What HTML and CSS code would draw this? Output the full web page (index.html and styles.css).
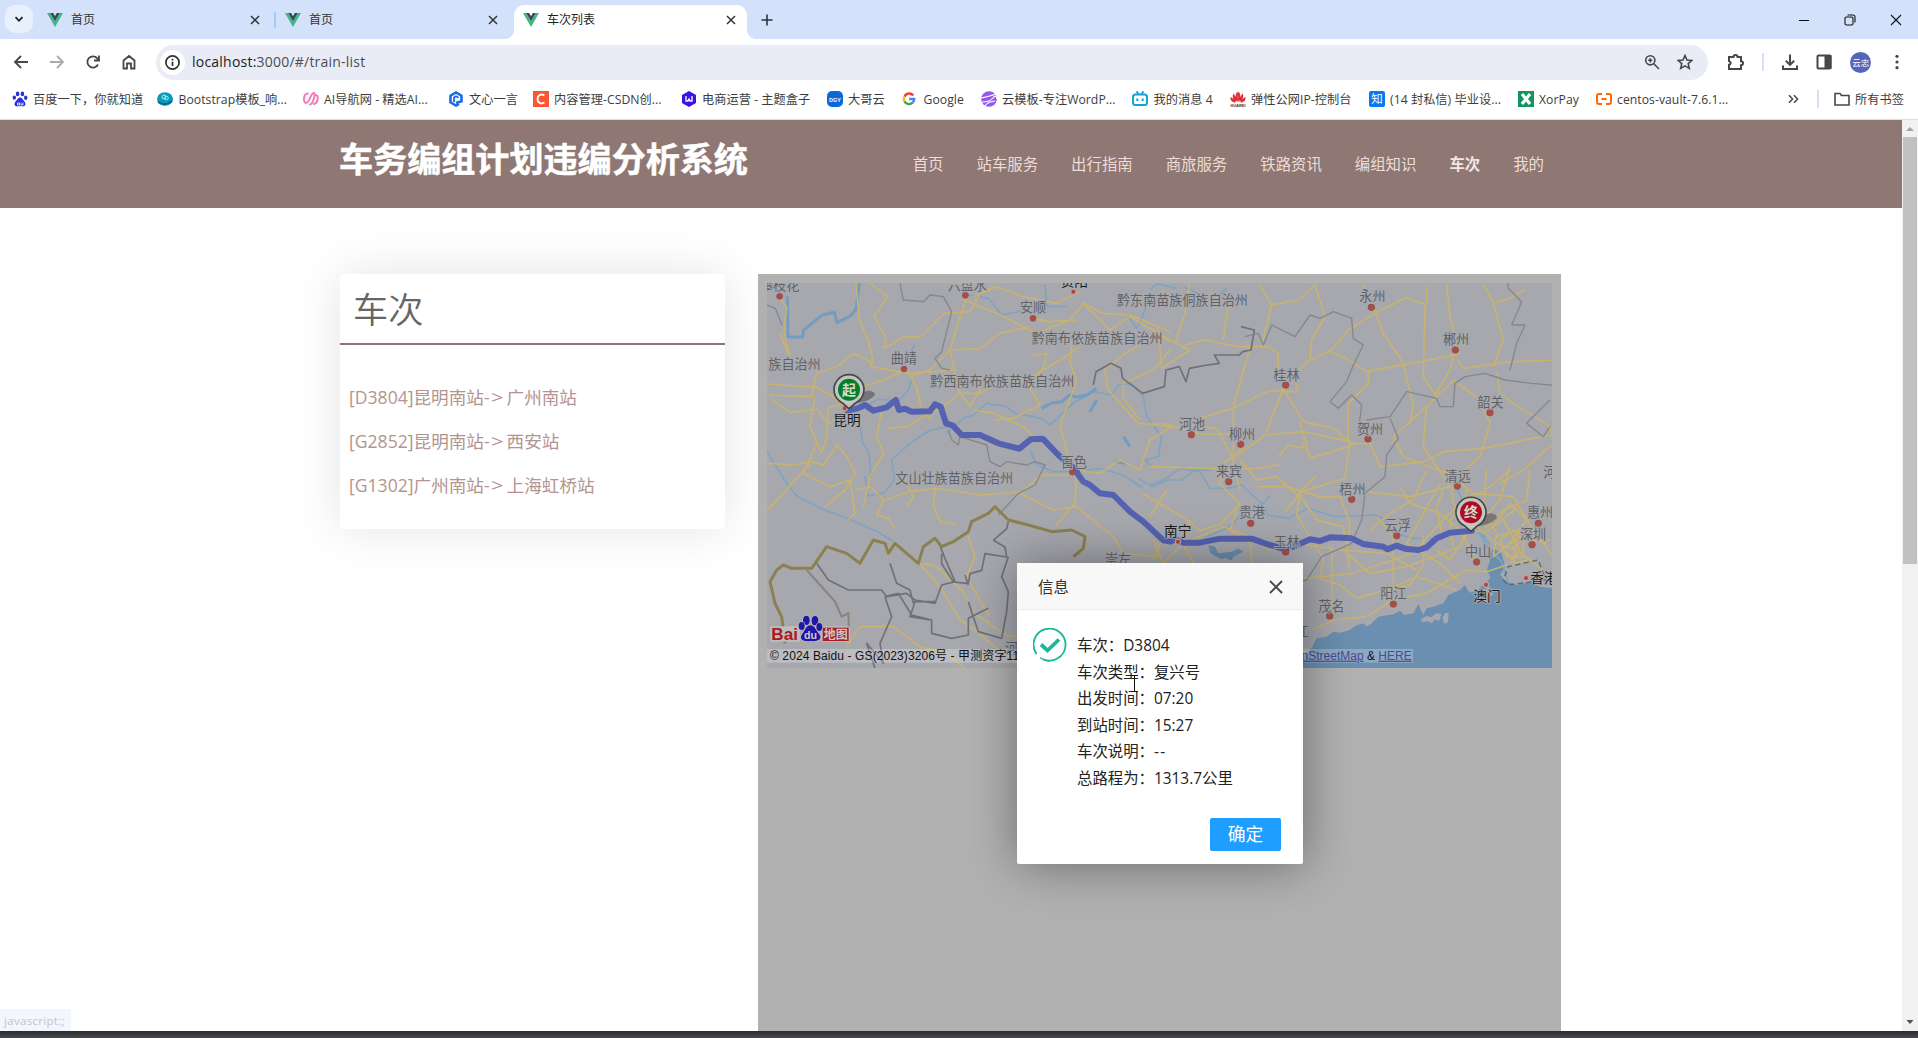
FILE: index.html
```html
<!DOCTYPE html>
<html lang="zh-CN">
<head>
<meta charset="utf-8">
<title>车次列表</title>
<link rel="stylesheet" href="styles.css">
</head>
<body>
<svg class="defs" aria-hidden="true">
  <symbol id="vue" viewBox="0 0 16 14"><path fill="#41b883" d="M0 0h3.2L8 8.3 12.8 0H16L8 14z"/><path fill="#35495e" d="M3.2 0h3L8 3.2 9.8 0h3L8 8.3z"/></symbol>
  <symbol id="close" viewBox="0 0 10 10"><path d="M1 1l8 8M9 1L1 9" fill="none" stroke="currentColor" stroke-width="1.5"/></symbol>
</svg>
<header class="tabstrip">
  <span class="tab-search"><svg width="10" height="7" viewBox="0 0 10 7"><path d="M1.5 1.2L5 4.8l3.500-3.600" fill="none" stroke="#1f1f1f" stroke-width="1.800"/></svg></span>
  <div class="tab tab-first"><svg class="fav"><use href="#vue"/></svg><span>首页</span><svg class="x"><use href="#close"/></svg></div>
  <div class="tab tab-second"><svg class="fav"><use href="#vue"/></svg><span>首页</span><svg class="x"><use href="#close"/></svg></div>
  <div class="tab active"><svg class="fav"><use href="#vue"/></svg><span>车次列表</span><svg class="x"><use href="#close"/></svg></div>
  <svg class="plus" width="12" height="12" viewBox="0 0 12 12"><path d="M6 .5v11M.5 6h11" stroke="#303238" stroke-width="1.600"/></svg>
  <div class="window-buttons">
    <svg width="12" height="12" viewBox="0 0 12 12"><path d="M1 6.500h10" stroke="#111"/></svg>
    <svg width="12" height="12" viewBox="0 0 12 12" fill="none" stroke="#111" stroke-width="1.100"><rect x="1" y="3" width="8" height="8" rx="1.500"/><path d="M3.500 1h5.500a2 2 0 0 1 2 2v5.500"/></svg>
    <svg width="12" height="12" viewBox="0 0 12 12"><path d="M1 1l10 10M11 1L1 11" stroke="#111" stroke-width="1.100"/></svg>
  </div>
</header>
<div class="toolbar">
  <div class="nav-icons">
    <svg viewBox="0 0 16 16"><path d="M15 8H2.500M8 2L2 8l6 6"/></svg>
    <svg class="dim" viewBox="0 0 16 16"><path d="M1 8h12.500M8 2l6 6-6 6"/></svg>
    <svg viewBox="0 0 16 16"><path d="M13 10.500A5.600 5.600 0 1 1 12.300 4.400L14 6.200M14 1.500v5H9"/></svg>
    <svg viewBox="0 0 16 16"><path d="M2.500 6.500L8 2l5.500 4.500V14.500H10V9.500H6v5H2.500z"/></svg>
  </div>
  <div class="omnibox">
    <span class="info"><svg viewBox="0 0 16 16"><circle cx="8" cy="8" r="6.200"/><path d="M8 7.300v4M8 4.500v1.600"/></svg></span>
    <span class="url"><b>localhost:</b>3000/#/train-list</span>
    <svg class="ic" viewBox="0 0 16 16"><circle cx="6.300" cy="6.300" r="4.600"/><path d="M9.800 9.800L15 15M4.200 6.300h4.200M6.300 4.200v4.200"/></svg>
    <svg class="ic" viewBox="0 0 16 16"><path d="M8 1.500l2 4.500 4.900.4-3.700 3.200 1.100 4.800L8 11.900l-4.300 2.500 1.100-4.800L1.100 6.400 6 6z"/></svg>
  </div>
  <div class="actions">
    <svg viewBox="0 0 18 18"><path d="M2 4h4.500a2 2 0 0 1 4 0H14v4.200a2 2 0 0 1 0 4V16H2v-4.300c2.300-.8 2.300-2.800 0-3.600z"/></svg>
    <i class="rule"></i>
    <svg viewBox="0 0 18 18"><path d="M9 1.500v10M4.800 7.700L9 11.900l4.200-4.200M2 12.500V16h14v-3.500"/></svg>
    <svg viewBox="0 0 18 18"><rect x="2.500" y="2.500" width="13" height="13" rx="1"/><path fill="#45474a" d="M10.500 3h5v12h-5z"/></svg>
    <span class="avatar">云忠</span>
    <svg viewBox="0 0 18 18"><g fill="#45474a" stroke="none"><circle cx="9" cy="3.300" r="1.600"/><circle cx="9" cy="9" r="1.600"/><circle cx="9" cy="14.700" r="1.600"/></g></svg>
  </div>
</div>
<nav class="bookmarks">
  <a><svg viewBox="0 0 16 16" fill="#2932d8"><ellipse cx="5.600" cy="2.900" rx="1.800" ry="2.400"/><ellipse cx="10.400" cy="2.900" rx="1.800" ry="2.400"/><ellipse cx="2.300" cy="6.600" rx="1.700" ry="2.200"/><ellipse cx="13.700" cy="6.800" rx="1.700" ry="2.200"/><path d="M8 6.500c2 0 2.500 2 4 3.500 3 3 1 6-2 5.300q-2-.4-4 0C3 16 1 13 4 10c1.500-1.500 2-3.500 4-3.500z"/><path d="M5.500 12h2v2h-2zM9 11.500v2.500h2v-2.500" stroke="#fff" stroke-width=".8" fill="none"/></svg>百度一下，你就知道</a>
  <a><svg viewBox="0 0 16 16"><ellipse cx="8" cy="8" rx="8" ry="6.800" fill="#0b98ba"/><path d="M1 11q7 5 14-1" stroke="#076b8b" stroke-width="2" fill="none"/><circle cx="7" cy="6" r="2" fill="none" stroke="#9ff"/><circle cx="9.500" cy="7" r="1.800" fill="none" stroke="#9ff" stroke-width=".8"/></svg>Bootstrap模板_响...</a>
  <a><svg viewBox="0 0 16 16" fill="none" stroke="#f27cb9" stroke-width="2" stroke-linecap="round"><path d="M5 2.500C0 3 0 11 3 12c4 0 4-10 8-10 1.500 2-1 11-4 11.500M13 4c3 1 2 8-2 9"/></svg>AI导航网 - 精选AI...</a>
  <a><svg viewBox="0 0 16 16" fill="none" stroke="#176de8" stroke-width="2.600"><path d="M11 13L8 14.500 2.500 11.300V4.700L8 1.500l5.500 3.200v5.500L8 12"/><path d="M6 11V6.500L8 5.300l2.500 1.500" stroke-width="1.800"/></svg>文心一言</a>
  <a><svg viewBox="0 0 16 16"><path fill="#fc5531" d="M0 0h16v16H0z"/><path d="M11.500 4.500C7 2 4.500 5 4.500 8s2.500 6 7 3.500" fill="none" stroke="#fff" stroke-width="1.900"/></svg>内容管理-CSDN创...</a>
  <a><svg viewBox="0 0 16 16"><path fill="#3c12e8" d="M8 0l7 4v8l-7 4-7-4V4z"/><path d="M5 5v5h2l1-2 1 2h2V5" fill="none" stroke="#fff" stroke-width="1.300"/></svg>电商运营 - 主题盒子</a>
  <a><svg viewBox="0 0 16 16"><rect width="16" height="16" rx="5" fill="#0869d8"/><text x="8" y="10.500" text-anchor="middle" class="tiny">DGY</text></svg>大哥云</a>
  <a><svg viewBox="0 0 16 16" fill="none" stroke-width="2.400"><path stroke="#ea4335" d="M11.200 4.500A5 5 0 0 0 2.600 5.600"/><path stroke="#fbbc05" d="M2.500 5.600a5.200 5.200 0 0 0 0 4.800"/><path stroke="#34a853" d="M2.500 10.400a5.200 5.200 0 0 0 8.200 1.300"/><path stroke="#4285f4" d="M10.700 11.700A5 5 0 0 0 12.200 8H7.200"/></svg>Google</a>
  <a><svg viewBox="0 0 16 16"><circle cx="8" cy="8" r="7.800" fill="#9358ef"/><path d="M0 7q6-1 15-4M1 11q8 0 11-4t4 1M4 15q2-4 10-5" fill="none" stroke="#fff" stroke-width="1.200"/></svg>云模板-专注WordP...</a>
  <a><svg viewBox="0 0 16 16" fill="none" stroke="#15a2d7" stroke-width="2"><rect x="1" y="3.500" width="14" height="10.500" rx="2.500"/><path d="M4.500 .5l2 2.500M11.500.5l-2 2.500M5.300 7.500v2.500M10.700 7.500v2.500"/></svg>我的消息 4</a>
  <a><svg viewBox="0 0 16 16" fill="#e12b36"><path d="M7.600 11C5 8 5 3 7.500.5 8.500 4 8.300 8 7.600 11zM8.400 11C11 8 11 3 8.500.5 7.500 4 7.700 8 8.400 11zM6.500 11C3 9 2 5 3.500 2.500 5.500 5 6.500 8 6.500 11zM9.500 11c3.500-2 4.500-6 3-8.500-2 2.500-3 5.500-3 8.500zM5.500 11.500C2 11.500 0 9 .5 6 3 7 5 9 5.500 11.500zM10.500 11.500c3.500 0 5.500-2.500 5-5.500-2.500 1-4.500 3-5 5.500z"/><text x="8" y="16" class="tiny dark" text-anchor="middle">HUAWEI</text></svg>弹性公网IP-控制台</a>
  <a><svg viewBox="0 0 16 16"><rect width="16" height="16" rx="2" fill="#0b78f2"/><text x="8" y="12" text-anchor="middle" class="zh">知</text></svg>(14 封私信) 毕业设...</a>
  <a><svg viewBox="0 0 16 16"><path fill="#12965d" d="M0 0h16v16H0z"/><path d="M4 3l8 10M12 3L4 13" stroke="#fff" stroke-width="3.200"/></svg>XorPay</a>
  <a><svg viewBox="0 0 16 16" fill="none" stroke="#ff6a00" stroke-width="2"><path d="M6 3H3Q1 3 1 5v6q0 2 2 2h3M10 3h3q2 0 2 2v6q0 2-2 2h-3M5.500 8h5"/></svg>centos-vault-7.6.1...</a>
  <svg class="more" viewBox="0 0 12 10"><path d="M1 1l4 4-4 4M6.500 1l4 4-4 4"/></svg>
  <i class="rule"></i>
  <a><svg viewBox="0 0 16 16" fill="none" stroke="#45474a" stroke-width="1.600"><path d="M1 2.500h5l1.500 2H15v9.500H1z"/></svg>所有书签</a>
</nav>
<div class="viewport">
  <div class="page">
    <header class="site-header">
      <h1>车务编组计划违编分析系统</h1>
      <nav class="menu"><a>首页</a><a>站车服务</a><a>出行指南</a><a>商旅服务</a><a>铁路资讯</a><a>编组知识</a><a class="current">车次</a><a>我的</a></nav>
    </header>
    <main class="content">
      <aside class="card">
        <h2>车次</h2>
        <ul><li>[D3804]昆明南站<span class="arrow">-<b>&gt;</b></span>广州南站</li><li>[G2852]昆明南站<span class="arrow">-<b>&gt;</b></span>西安站</li><li>[G1302]广州南站<span class="arrow">-<b>&gt;</b></span>上海虹桥站</li></ul>
      </aside>
      <section class="panel">
        <svg class="map" viewBox="51 39 2355 1155">
          <path fill="#a7a8ae" d="M0 0h2500v1300H0z"/>
          <!-- sea and estuary -->
          <path class="sea" d="M1640 1194L1660 1160 1685 1133 1700 1105 1730 1100 1750 1085 1770 1088 1800 1080 1815 1068 1840 1060 1850 1070 1865 1060 1885 1040 1930 1033 1950 1022 1962 1035 1990 1030 2005 1003 2020 1035 2030 1015 2050 1010 2080 1000 2095 975 2130 960 2145 945 2158 968 2185 960 2200 942 2222 925 2211 900 2220 872 2212 845 2235 838 2255 850 2265 890 2250 915 2270 935 2300 945 2340 935 2370 950 2406 955V1194z"/>
          <g fill="#a7a8ae"><path d="M2012 1048l18-10 14 4 14-12 16 2-6 20-14-4-8 12-14-6-16 2zM2078 1042l8-14 10 2-2 26-12 6zM2200 960l20-10 10 25-20 4zM2290 905l30-15 25 20 40 5-35 15-45-7z"/></g>
          <g class="river">
            <path class="wide" d="M112 79l2 122h44l2-20 55-45 38-10 8 32 40-20 17-20 10-80"/>
            <path d="M51 545l62 100 30 35 80 40 75 28 80 35 50 30M485 330l-10 30-30 35-60-8-30 18M495 225l-15 22M330 470l8 50 18 25 8 77M600 470l-60 10-60 40-55 50 8 60-30 38-50 10-8-60M655 75l60 10 40 50 60-12M885 45l5 65 60 0M1130 130l30 45 15-30 15-40M1200 60l20-20 60 15M1300 50l40 18-35 35M1400 80l30-25"/>
            <path d="M590 490l50-45 30-10 40-35 60 10 25 20 80 15 25 20 75-70 60-30 50 10 20-30 40-5 35 40 10 60 45 60-10 60-40 10 20 20M840 540l20 45 50 20 80 0 60-10 70 20 60 40M1165 625l40 25 50-20 40 0 40-30 50 0"/>
            <path class="wide" d="M875 415l30-16 30-4 25-20 20 6 30-6 30-20M1020 425l20-35M1120 500l20 30M1095 575l35 5"/>
            <path d="M1200 645l40-15 50-35 60 10 30 50 50 0 45-10 60 55 20 35 60 10 60-30 30 10 50 15 120-5 30 15 20 35 60 20 80 0 60-20 60 0 30 50 40 40 20 60M1370 800l60-25 50-45 60-30 20-25M2120 655l60 120 40 50M2200 775l10 50"/>
          </g>
          <path class="sea" d="M1375 825l20 5 10 20 40-5 20-10 15 10-30 15-5 12-18-8-12 4-20-10-15-10z"/>
          <g class="road">
            <path d="M318 40l10 110 25 55 15 60-5 25 115 20 140-10M362 40l50 40-40 60 35 60-5 35 60-35h50l70-70 80-5 30-60 45-15M370 280l-60-30-50 40-60 20-15 70-130-5M51 342l150 10 50 30 45 40-60 40-35-45-80 10-60-40M90 190l30 75-18-75 8-80-25-30M195 380l-15 90 35 80 15-50 5-85 60-20M51 580l80 5 50-10 40 10 40-60 30 35 25 50-30 50-60 50M180 580l-80 90-50 50M300 410l40-60 60-20 70-30 30 50 15 70 30 30M395 420l-15 80 20 50-40 70-20 90M410 475l60-5 50-30 60-30 50-40 60 0 60-30 80-10 100-60 60-40M480 320l60-20 60-60 30-100 20-55M600 240l90-5 60-45 90-20M600 240l25 120 35 50 30-50-10-30"/>
            <path d="M640 90l100 40 120 60 100-40 40-50 60 30 80 5 120 50M670 80l70-30 80 30 100 20 70-35M850 145l50 10 80-5M970 190l-10 85 20 60-50 130 20 80 20 50M850 255l40-5-10 45-45 50 35 60-80 40-60 5M1000 100l80 80 60-40 120 70 60 30-85 55-10-120M860 510l-40-40-90-40-60-10M980 600l70 10 60-40 60 30 30-90 65-40-100-10-90-100-10-60 60-50 55-30M1170 450l-50-65 0-45 90-40 50-60M1275 220l30-90 15-90M1420 210l15-110M1260 215l-50-35M1305 225l60-15 100 20 90 0 30 20 0 65M1500 230l-50 180 0 170 20 80"/>
            <path d="M1535 225l30-120-40-70M1565 105l80-15 50-45 30 95-40 70-5 60-70 60M1685 270l60-30 50-60 80-50 100-50M1740 245l50 20 60 40 240-45 40-10M1840 40l60 150 60 90 30 130-10 50M1970 85l60 20 0-60M2025 100l-5 220 40 60M2090 40l10 100 20 80-20 80-45 75M2120 265l20 30 140-20 150-5M2230 290l30-80-30-110-30-60M2235 98l40-10 50-30M2240 310l10 60 40 30 110 70 10 50-90 80-70 40M2110 330l80 60 30 70-30 100-70 60-160-60-30-60 100-90M2110 330l-80 80-10 120 80 120-120 30-180-20"/>
            <path d="M1350 445l100-30 100-50 50-5M1600 355l-55 140-95 70-50-90-110-15M1600 355l60 100 90 20 60 50-130 40-30-110M1600 365l45 0-10-35M1795 520l0-120 60-60 0-35M1800 520l60 0 30 70 130-15 60-30 120-10 200-40M1550 495l110-10 140 30-15 110-130 40-50 60M1585 560l30-35 50 10-10-20M1200 462l50 0 100 30 90 0 40 40-60 50-10 60 60 60-60 60-60 20-50-40-120-70M1200 590l160 5 160 0 70-10M1470 570l50 60 60-10 80 70 40 60 80 20 20 130"/>
            <path d="M100 670l-45 50M200 520l-40 90 80 40 60-20 15 100-20 20M315 660l45-10 40 40-20 45 35 10 20 30M395 695l80-30 80-10 140 20 120-10 60-50 80 0M460 620l30 60-20 30M555 655l-5 50 20 50 50 10M500 870l70 80 60 100 60 40 30 30 85 60M520 880l40 10 80 75 30 65 50 30M655 800l20 60-25 60 45 80 25 40M715 1060l60 40 60-10M810 670l100 50 70-10 60 50 50 40 30 50 110 10M980 600l-5 100-60 70M1200 740l50-80M1210 810l30 70 60-60 20-70"/>
            <path d="M430 1070l-100 0-40 60M430 1070l80 60 80 20 60 50M1240 800l-30 70M1290 810l40 65-20 50M1300 820l120-50 80 30 60 40 80-20 130 20 140 10 90 50M1460 720l-20 60 60 40 10 80M1520 650l90 0 100 30 60 0 30 80-10 90 70 60 110-20 160-60 30-80M1700 615l-50 50-10 70 80 130-10 60 60 20 50 40 70-20 90-20 40-60 0-90M1745 830l0 200M1690 1080l60-30 100-10 80-50 100-20 120-70 60 5 60-20M1610 930l200-20 180-60 70-80 60-60M1880 740l50 60 0 150 70-30 60 20 60 20M1950 650l30 50 90 30 60 50 80 5 90-70M2030 600l-40 90-70 40-60 50M2070 640l-60 110-40 70 100 60 60 60M2100 600l10 100 50 80-60 90-40-30"/>
            <path d="M2080 600l90 70 120 10 60 100 60 80M2170 670l-70 80 10 80M2210 600l-10 120 40 70-10 70 80-60 80 20M2280 590l-30 100-70 80 60 50 60 20 80 60M2140 700l80-50 60-50M2340 600l-10 90-70 30-60 60M2230 770l50-70 50 50-60 80M2250 810l40-30 30 30 0 50-50 0zM2280 840l50-40 70 10M2260 750l50 90-30 40M2080 660l-20 50 15 80M2150 650l-10 150 50 90M2255 830l40 50 40-10M2240 800l60-20 40 30M2300 800l-10 80"/>
          </g>
          <g class="border">
            <path d="M450 40l10 50 60 5 20-20 40 5 25 45-30 120-20 20 20 30 25 5M51 105l25 10 20 50M595 480l10 30 20 15 5-25 80 25 10 50 30 15 20-15 60 10 25-10 30 10-30 60-50 25-60 65"/>
            <path class="strong" d="M1030 345l8-40 45-25 30 15 5 30 60 45 65-20 5-50 40-10 20 45 10-40 55-10 35-5-15-25 75 0 10-10 25-5 10-60-40-10"/>
            <path d="M1485 200l40-10 15 35 25-60 70 35 45-65 30 10 40-20 55 20 5 60 30 20-30 60-20 50-50 60 25 20 40-40 30 30-10 80M1850 450l70-10 50-75 90 20 10 25 40 0 5-70 30-20 60-10 60 20 80 10 110 10M2280 300l20-80 25-55-40 0 30-70-40-40-5-30M1920 445l25 60-35 50-5 65-60 50-10 80-30 70-90 40-45 70-60 10M2400 390l-70 70 50 40 20-30"/>
            <path class="strong" d="M200 880l35 50 60 30 100 0 15 20 60-10 25 20 60 10 20-55 40-10-30-70-20-50M555 995l-60 0-15 45 60 10M420 880l20 60 40 20 10 40M405 980l20 60-35 80 10 60-50-60 40 120M405 980l40-10 40 65 60 15 0 40 60 15 50-10 0-50 60-30M730 811l40-35 5-20M730 811l35 20 5 30-65-10-10 50-35 10-5 30-45-5-35-55 0-30M655 945l-10-30M775 860l-20 60 20 45-5 60-15 80-70-20-30-90"/>
          </g>
          <path class="nation" d="M105 1120l-10-80-20-40-15-65 20-35 20-15 25 10 60 0 45-65 60 20 40 30 40-70 35 10 10 30 20-30 70 60 15-50 35-25 20 25 35-15 45-30 10-30 50-25 20-20 40 40 60 15 70 20 60-5 40 20-5 35-30 25"/>
          <path d="M170 900l85 95 20 45 20-10 2 60" fill="none" stroke="#85857e" stroke-width="6"/>
          <path class="dash" d="M2270 940l-10-10 15-40 90-20 15 40 10 20-120 15z"/>
          <path class="route" d="M292 422L320 416 345 405 370 422 410 412 437 390 447 420 465 416 485 425 540 424 555 403 572 410 588 460 608 466 635 495 690 495 745 520 808 536 842 508 878 506 925 555 978 600 985 615 1000 635 1020 645 1050 670 1090 675 1140 725 1180 755 1240 811 1262 815 1275 808 1300 818 1350 818 1410 806 1505 806 1550 822 1595 835 1630 830 1680 808 1710 813 1740 802 1805 805 1840 822 1900 830 1912 838 1940 827 1965 836 2005 840 2030 832 2060 805 2100 788 2165 782"/>
          <g class="dot"><circle cx="89" cy="79" r="9"/><circle cx="646" cy="76" r="9"/><circle cx="849" cy="145" r="9"/><circle cx="462" cy="297" r="9"/><circle cx="967" cy="606" r="9"/><circle cx="1864" cy="112" r="10"/><circle cx="2116" cy="240" r="10"/><circle cx="1607" cy="345" r="10"/><circle cx="2220" cy="428" r="10"/><circle cx="1854" cy="507" r="10"/><circle cx="1324" cy="494" r="10"/><circle cx="1472" cy="523" r="10"/><circle cx="1436" cy="635" r="10"/><circle cx="1805" cy="688" r="10"/><circle cx="1502" cy="760" r="10"/><circle cx="1607" cy="846" r="10"/><circle cx="1940" cy="797" r="10"/><circle cx="2122" cy="648" r="10"/><circle cx="2365" cy="760" r="10"/><circle cx="2346" cy="824" r="10"/><circle cx="2180" cy="876" r="10"/><circle cx="1739" cy="1038" r="10"/><circle cx="1930" cy="1002" r="10"/></g>
          <g class="capital"><circle cx="970" cy="65" r="8"/><circle cx="284" cy="415" r="8"/><circle cx="1284" cy="815" r="8"/><circle cx="2208" cy="944" r="8"/><circle cx="2328" cy="924" r="8"/></g>
          <g class="label">
            <text x="30" y="60">攀枝花</text><text x="593" y="60">六盘水</text><text x="810" y="126">安顺</text><text x="1101" y="104">黔东南苗族侗族自治州</text><text x="845" y="219">黔南布依族苗族自治州</text><text x="422" y="278">曲靖</text><text x="55" y="298">族自治州</text><text x="541" y="347">黔西南布依族苗族自治州</text><text x="932" y="590">百色</text><text x="436" y="639">文山壮族苗族自治州</text><text x="1065" y="882">崇左</text><text x="765" y="1150">河内</text>
            <text x="1828" y="93">永州</text><text x="2079" y="223">郴州</text><text x="1570" y="329">桂林</text><text x="2182" y="412">韶关</text><text x="1821" y="492">贺州</text><text x="1287" y="476">河池</text><text x="1437" y="506">柳州</text><text x="1398" y="617">来宾</text><text x="1768" y="672">梧州</text><text x="1467" y="742">贵港</text><text x="1571" y="831">玉林</text><text x="1904" y="779">云浮</text><text x="2084" y="632">清远</text><text x="2331" y="742">惠州</text><text x="2310" y="806">深圳</text><text x="2145" y="858">中山</text><text x="1705" y="1022">茂名</text><text x="1891" y="984">阳江</text><text x="1597" y="1098">湛江</text><text x="2380" y="622">河源</text>
          </g>
          <g class="label main"><text x="932" y="47">贵阳</text><text x="250" y="465">昆明</text><text x="1242" y="797">南宁</text><text x="2170" y="994">澳门</text><text x="2341" y="938">香港</text></g>
          <g class="shadow"><path d="M310 400q10-35 45-38 25 2 18 16-20 20-63 22zM2176 768q10-35 45-38 25 2 18 16-20 20-63 22z"/></g>
          <g class="pin"><path d="M297 416L277 399A45 45 0 1 1 317 399Z"/><circle cx="297" cy="359" r="33" fill="#087d27"/><text x="297" y="374">起</text></g>
          <g class="pin"><path d="M2163 784L2143 767A45 45 0 1 1 2183 767Z"/><circle cx="2163" cy="727" r="33" fill="#ae0d21"/><text x="2163" y="742">终</text></g>
          <g class="brand"><rect x="60" y="1069" width="90" height="46" rx="5"/><rect x="212" y="1069" width="88" height="46" rx="5"/><text x="64" y="1111" textLength="80" lengthAdjust="spacingAndGlyphs">Bai</text><path fill="#a81a25" d="M218 1073h78v40h-78z"/><text x="221" y="1107" class="white">地图</text><g fill="#2017a6" stroke="#bbb" stroke-width="5" paint-order="stroke"><ellipse cx="169" cy="1051" rx="10" ry="14"/><ellipse cx="195" cy="1052" rx="10" ry="14"/><ellipse cx="155" cy="1068" rx="9" ry="12"/><ellipse cx="208" cy="1071" rx="9" ry="12"/><path d="M181 1066c15 0 17 18 27 27 10 14-3 23-26 20-24 3-35-5-26-20 9-9 11-27 25-27z"/></g><text x="162" y="1108" class="du">du</text></g>
          <path fill="#fff" opacity=".24" d="M51 1137h800v41H51zM1300 1137h689v41H1300z"/>
          <g class="copyright"><text x="60" y="1169" textLength="765">© 2024 Baidu - GS(2023)3206号 - 甲测资字111</text><text x="1985" y="1169" text-anchor="end">© <tspan class="link">OpenStreetMap</tspan> &amp; <tspan class="link">HERE</tspan></text></g>
        </svg>
      </section>
    </main>
    <div class="dialog">
      <div class="dialog-title"><span>信息</span><svg viewBox="0 0 14 14"><path d="M1 1l12 12M13 1L1 13"/></svg></div>
      <div class="dialog-body">
        <svg class="success" viewBox="0 0 34 34"><path d="M3.600 26A16 16 0 1 1 10 31.200" stroke-width="1.800"/><path d="M7 29.500a16 16 0 0 0 10 3.500" stroke-width="1.300"/><path d="M8 16.500l6.500 6L26 11.500" stroke-width="3.800"/></svg>
        <p>车次：D3804<br>车次类型：复兴号<br>出发时间：07:20<br>到站时间：15:27<br>车次说明：<span class="dashes">--</span><br>总路程为：1313.7公里</p>
      </div>
      <button>确定</button>
    </div>
    <svg class="cursor" width="7" height="17" viewBox="0 0 7 17"><path d="M0 .5h2.500L3.500 1.500 4.500.5H7M3.500 1v15M0 16.500h2.500l1-1 1 1H7" fill="none" stroke="#111"/></svg>
    <span class="status">javascript:;</span>
  </div>
  <div class="scrollbar"><svg viewBox="0 0 16 17"><path fill="#a3a3a3" d="M4 11l4-4 4 4z"/></svg><i></i><svg class="down" viewBox="0 0 16 17"><path fill="#505050" d="M4.500 6h7L8 10z"/></svg></div>
</div>
<div class="desktop"></div>
</body>
</html>
```
FILE: styles.css
```css
* { box-sizing: border-box; }
body { margin: 0; width: 1918px; height: 1038px; overflow: hidden; display: flex; flex-direction: column; background: #fff; color: #333; font: 12px "Open Sans", "Noto Sans CJK SC", sans-serif; }
.defs { position: absolute; width: 0; height: 0; }
svg { flex: none; }

.tabstrip { height: 39px; background: #d3e1fb; display: flex; align-items: center; padding-left: 5px; }
.tab-search { width: 28px; height: 28px; margin-top: -1px; border-radius: 10px; background: #e9f0fd; display: grid; place-items: center; }
.tab { display: flex; align-items: center; width: 238px; height: 34px; padding: 0 10px 0 14px; position: relative; }
.tab span { flex: 1; margin-left: 8px; line-height: 18px; }
.tab .fav { width: 16px; height: 14px; }
.tab .x { width: 10px; height: 10px; margin-right: 5px; color: #333; }
.tab-first { padding-right: 6px; }
.tab-second { width: 243px; padding-right: 11px; }
.tab-second::before { content: ""; position: absolute; left: 3px; top: 9px; width: 2px; height: 16px; background: #a9c7f2; }
.tab.active { width: 233px; height: 34px; margin-top: 5px; padding: 0 6px 5px 9px; background: #fff; border-radius: 10px 10px 0 0; color: #1f1f1f; }
.tab.active::before, .tab.active::after { content: ""; position: absolute; bottom: 0; width: 10px; height: 10px; }
.tab.active::before { left: -10px; background: radial-gradient(circle at 0 0, transparent 10px, #fff 10.5px); }
.tab.active::after { right: -10px; background: radial-gradient(circle at 100% 0, transparent 10px, #fff 10.5px); }
.plus { margin-left: 14px; }
.window-buttons { margin-left: auto; margin-right: 16px; display: flex; gap: 34px; }

.toolbar { height: 46px; display: flex; align-items: center; padding-left: 13px; }
.nav-icons { display: flex; gap: 20px; width: 143px; }
.nav-icons svg { width: 16px; height: 16px; fill: none; stroke: #45474a; stroke-width: 1.8; }
.nav-icons .dim { stroke: #aaa; }
.omnibox { width: 1552px; height: 35px; border-radius: 18px; background: #e9ecf6; display: flex; align-items: center; gap: 17px; padding: 0 15px 0 4px; }
.info { width: 25px; height: 25px; border-radius: 50%; background: #fff; display: grid; place-items: center; margin-right: -10px; }
.info svg { width: 17px; height: 17px; fill: none; stroke: #303030; stroke-width: 1.6; }
.url { flex: 1; font-size: 14px; letter-spacing: .22px; padding-bottom: 2px; color: #4b4d52; }
.url b { font-weight: 400; color: #202124; }
.ic { width: 16px; height: 16px; fill: none; stroke: #45474a; stroke-width: 1.6; }
.actions { display: flex; align-items: center; justify-content: space-between; width: 179px; margin-left: 19px; }
.actions svg { width: 18px; height: 18px; fill: none; stroke: #45474a; stroke-width: 2; }
.rule { width: 2px; height: 18px; background: #d3e0f7; }
.avatar { width: 21px; height: 21px; border-radius: 50%; background: #5565b8; color: #fff; font-size: 8.5px; line-height: 21px; text-align: center; }

.bookmarks { height: 35px; padding: 0 0 6px 11.5px; border-bottom: 1px solid #dedfda; display: grid; align-items: center; color: #3b3d40; grid-template-columns: 145.5px 145.5px 145px 85px 148px 146px 75.5px 78.500px 151.5px 97.5px 139px 149px 78px 192px 29px 17px 86px; }
.bookmarks a { display: flex; align-items: center; gap: 5.5px; white-space: nowrap; font-size: 12.2px; letter-spacing: .05px; }
.bookmarks a svg { width: 16px; height: 16px; }
.bookmarks .more { width: 11px; height: 10px; fill: none; stroke: #45474a; stroke-width: 1.6; }
.tiny { font: bold 5.5px "Liberation Sans", sans-serif; fill: #fff; }
.tiny.dark { font-size: 3.7px; fill: #333; }
.zh { font-size: 11.5px; fill: #fff; }

.viewport { flex: 1; min-height: 0; display: flex; }
.page { flex: 1; position: relative; overflow: hidden; }
.site-header { height: 88px; background: #8f7873; display: flex; justify-content: space-between; align-items: flex-start; padding: 0 358px 0 339px; }
h1 { margin: 14px 0 0; font-size: 34.1px; line-height: 50px; font-weight: 700; color: #fff; -webkit-text-stroke: .5px #fff; }
.menu { display: flex; gap: 33px; margin-top: 33px; font-size: 15.4px; line-height: 24px; color: #eddcd7; }
.menu .current { font-weight: 700; color: #f3e6e2; }
.content { padding: 66px 341px 0 340px; display: flex; gap: 33px; align-items: flex-start; }
.card { width: 385px; height: 255px; border-radius: 4px; background: #fff; box-shadow: 0 0 50px rgba(0,0,0,.11); }
h2 { margin: 0; height: 71px; padding: 10px 0 0 13px; border-bottom: 2px solid #8f7873; font-size: 35.2px; font-weight: 350; line-height: 50px; color: #666; }
.card ul { list-style: none; margin: 30px 0 0; padding: 0 9px; }
.card li { height: 44px; line-height: 44px; font-size: 17.6px; color: #b39490; }
.arrow { letter-spacing: 1.5px; }
.arrow b { font-weight: 400; letter-spacing: 0; display: inline-block; width: 15.5px; transform: scaleX(1.25); transform-origin: left; }
.panel { width: 803px; height: 757px; padding: 9px; background: #b1b1b1; }

.map { display: block; width: 785px; height: 385px; }
.sea { fill: #6b8fb0; }
.river, .road, .border { fill: none; stroke-linejoin: round; }
.river { stroke: #7fa3c0; stroke-width: 5; }
.river .wide { stroke-width: 9; stroke: #719dc2; }
.road { stroke: #c8b26f; stroke-width: 5; }
.border { stroke: #85868e; stroke-width: 4; }
.border .strong { stroke: #707178; stroke-width: 5; }
.nation { fill: none; stroke: #8b8050; stroke-width: 9; stroke-linejoin: round; }
.dash { fill: none; stroke: #596a78; stroke-width: 4; stroke-dasharray: 16 10; }
.route { fill: none; stroke: #5561b1; stroke-width: 18; stroke-linejoin: round; stroke-linecap: round; }
.dot { fill: #ad4c47; stroke: #85524e; stroke-width: 2; }
.capital { fill: #b34242; stroke: #b6a2a4; stroke-width: 4; }
.label { font-size: 39.3px; fill: #606166; stroke: #aaabb0; stroke-width: 5; paint-order: stroke; font-family: "Noto Sans CJK SC", sans-serif; }
.label.main { font-size: 41px; fill: #18191b; font-weight: 400; }
.shadow { fill: #555; opacity: .6; }
.pin path { fill: #c3c6c2; stroke: #454946; stroke-width: 5; stroke-linejoin: round; }
.pin text { font-size: 42px; font-weight: 700; fill: #d5dbd5; text-anchor: middle; }
.brand { font: bold 49px "Liberation Sans", sans-serif; fill: #ad1822; }
.brand rect { fill: #bdbdbf; }
.brand .white { font: bold 36px "Noto Sans CJK SC", sans-serif; fill: #c8c8c8; }
.brand .du { font-size: 32px; fill: #ccc; }
.copyright { font: 36px "Liberation Sans", "Noto Sans CJK SC", sans-serif; fill: #111; }
.link { fill: #4b4c92; text-decoration: underline; }

.dialog { position: absolute; left: 1017px; top: 443px; width: 286px; height: 301px; border-radius: 2px; background: #fff; box-shadow: 1px 1px 50px rgba(0,0,0,.4); color: #222; }
.dialog-title { height: 47px; padding: 0 20px 0 21px; display: flex; justify-content: space-between; align-items: center; background: #f8f8f8; border-bottom: 1px solid #eee; font-size: 15.4px; color: #333; }
.dialog-title svg { width: 14px; height: 14px; margin-top: 2px; fill: none; stroke: #44464a; stroke-width: 1.8; }
.dialog-body { display: flex; gap: 10px; padding: 18px 15px 0 16px; }
.success { width: 34px; height: 34px; fill: none; stroke: #16b99a; }
.dialog-body p { margin: 5px 0 0; font-size: 15.4px; line-height: 26.5px; white-space: nowrap; }
.dashes { letter-spacing: 1.3px; }
.dialog button { position: absolute; right: 22px; bottom: 13px; width: 71px; height: 33px; padding: 0 0 1px; border: 0; border-radius: 2px; background: #1e9fff; color: #fff; font: 17.8px/32px "Open Sans", "Noto Sans CJK SC", sans-serif; }
.cursor { position: absolute; left: 1131px; top: 555px; }
.status { position: absolute; left: 0; bottom: 0; width: 71px; height: 22px; padding-left: 4px; line-height: 23px; letter-spacing: .3px; background: #f3f6fe; color: #c2c4c9; font-size: 11.5px; }
.scrollbar { width: 16px; background: #f1f1f1; display: flex; flex-direction: column; }
.scrollbar svg { width: 16px; height: 17px; }
.scrollbar i { height: 427px; margin: 0 1px; background: #c1c1c1; }
.scrollbar .down { margin-top: auto; }
.desktop { height: 7px; background: linear-gradient(#292b2f, #46484d); }
```
